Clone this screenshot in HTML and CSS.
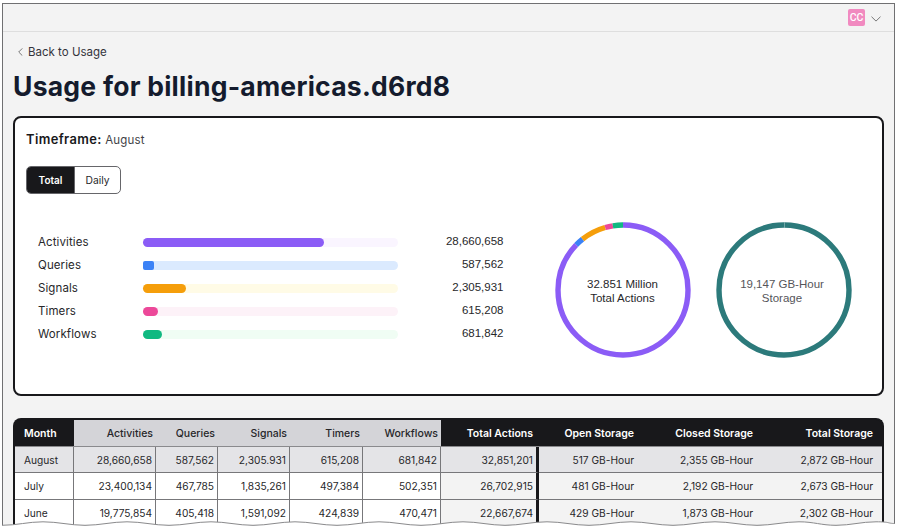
FILE: index.html
```html
<!DOCTYPE html>
<html lang="en">
<head>
<meta charset="utf-8">
<title>Usage</title>
<link rel="stylesheet" href="styles.css">
</head>
<body>
<div class="frame">
  <header class="topbar">
    <span class="avatar">CC</span>
    <svg class="chevron" width="10" height="6" viewBox="0 0 10 6"><path d="M.5 .7 5 5.1 9.500 .7"/></svg>
  </header>
  <main>
    <a class="back"><svg width="5" height="8" viewBox="0 0 5 8"><path d="M4.300 .4.700 4l3.600 3.600"/></svg><span>Back to Usage</span></a>
    <h1><span>Usage for billing-americas.d6rd8</span></h1>
    <section class="card">
      <p class="timeframe"><b>Timeframe:</b> <span>August</span></p>
      <div class="toggle"><span class="on">Total</span><span class="off">Daily</span></div>
      <div class="charts">
        <div class="bars">
          <div class="bar activities"><span class="name">Activities</span><span class="track"><i></i></span><span class="count">28,660,658</span></div>
          <div class="bar queries"><span class="name">Queries</span><span class="track"><i></i></span><span class="count">587,562</span></div>
          <div class="bar signals"><span class="name">Signals</span><span class="track"><i></i></span><span class="count">2,305,931</span></div>
          <div class="bar timers"><span class="name">Timers</span><span class="track"><i></i></span><span class="count">615,208</span></div>
          <div class="bar workflows"><span class="name">Workflows</span><span class="track"><i></i></span><span class="count">681,842</span></div>
        </div>
        <div class="ring">
          <svg width="136" height="136" viewBox="0 0 136 136">
            <g transform="rotate(-90 68 68)" fill="none" stroke-width="5.400">
              <circle cx="68" cy="68" r="65" pathLength="360" stroke="#8b5cf6" stroke-dasharray="314 360"/>
              <circle cx="68" cy="68" r="65" pathLength="360" stroke="#3b82f6" stroke-dasharray="7.500 360" stroke-dashoffset="-314"/>
              <circle cx="68" cy="68" r="65" pathLength="360" stroke="#f59e0b" stroke-dasharray="22.500 360" stroke-dashoffset="-321.500"/>
              <circle cx="68" cy="68" r="65" pathLength="360" stroke="#ec4899" stroke-dasharray="7 360" stroke-dashoffset="-344"/>
              <circle cx="68" cy="68" r="65" pathLength="360" stroke="#10b981" stroke-dasharray="9 360" stroke-dashoffset="-351"/>
            </g>
          </svg>
          <p>32.851 Million<br>Total Actions</p>
        </div>
        <div class="ring storage">
          <svg width="136" height="136" viewBox="0 0 136 136">
            <circle cx="68" cy="68" r="65" fill="none" stroke="#2c7a7b" stroke-width="5.400"/>
            <path class="seam" d="M68.500 0v6"/>
          </svg>
          <p>19,147 GB-Hour<br>Storage</p>
        </div>
      </div>
    </section>
    <section class="table">
      <div class="row head"><b>Month</b><span>Activities</span><span>Queries</span><span>Signals</span><span>Timers</span><span>Workflows</span><b>Total Actions</b><b>Open Storage</b><b>Closed Storage</b><b>Total Storage</b></div>
      <div class="row current"><span>August</span><span>28,660,658</span><span>587,562</span><span>2,305.931</span><span>615,208</span><span>681,842</span><span>32,851,201</span><span>517 GB-Hour</span><span>2,355 GB-Hour</span><span>2,872 GB-Hour</span></div>
      <div class="row"><span>July</span><span>23,400,134</span><span>467,785</span><span>1,835,261</span><span>497,384</span><span>502,351</span><span>26,702,915</span><span>481 GB-Hour</span><span>2,192 GB-Hour</span><span>2,673 GB-Hour</span></div>
      <div class="row"><span>June</span><span>19,775,854</span><span>405,418</span><span>1,591,092</span><span>424,839</span><span>470,471</span><span>22,667,674</span><span>429 GB-Hour</span><span>1,873 GB-Hour</span><span>2,302 GB-Hour</span></div>
    </section>
  </main>
</div>
<svg class="wave" width="900" height="16" viewBox="0 516 900 16">
  <path class="cover" d="M0 525.300H2C17 525.300 28 521.800 43 521.800S70 525.300 85 525.300 112 521.800 127 521.800 154 525.300 169 525.300 196 521.800 211 521.800 238 525.300 253 525.300 280 521.800 295 521.800 322 525.300 337 525.300 364 521.800 379 521.800 406 525.300 421 525.300 448 521.800 463 521.800 490 525.300 505 525.300 532 521.800 547 521.800 574 525.300 589 525.300 616 521.800 631 521.800 658 525.300 673 525.300 700 521.800 715 521.800 742 525.300 757 525.300 784 521.800 799 521.800 821 525.300 836 525.300 861 521.800 876 521.800 887 523.500 895 523.500H900V532H0Z"/>
  <path class="edge" d="M2 525.300C17 525.300 28 521.800 43 521.800S70 525.300 85 525.300 112 521.800 127 521.800 154 525.300 169 525.300 196 521.800 211 521.800 238 525.300 253 525.300 280 521.800 295 521.800 322 525.300 337 525.300 364 521.800 379 521.800 406 525.300 421 525.300 448 521.800 463 521.800 490 525.300 505 525.300 532 521.800 547 521.800 574 525.300 589 525.300 616 521.800 631 521.800 658 525.300 673 525.300 700 521.800 715 521.800 742 525.300 757 525.300 784 521.800 799 521.800 821 525.300 836 525.300 861 521.800 876 521.800 887 523.500 895 523.500"/>
</svg>
</body>
</html>
```
FILE: styles.css
```css
* { box-sizing: border-box; }
body { margin: 0; height: 532px; overflow: hidden; background: #fff; font-family: Inter, sans-serif; color: #27272a; }
p, h1 { margin: 0; }
.frame { margin: 3px 0 0 2px; width: 893px; height: 523px; overflow: hidden; background: #f3f3f3; border: 1px solid #707072; border-bottom: 0; }
.topbar { height: 28px; border-bottom: 1px solid #dedede; display: flex; justify-content: flex-end; align-items: center; gap: 6px; padding-right: 13px; }
.avatar { width: 17px; height: 17px; border-radius: 2px; background: #f18ac0; color: #fff; font: 500 10.500px/17px Roboto, sans-serif; text-align: center; }
.chevron { margin-top: 3px; }
svg path { fill: none; stroke: #777; stroke-width: 1; }
svg .seam { stroke: #8fb9b9; stroke-width: .7; }
main { padding: 0 10px; }
.back { display: flex; align-items: center; gap: 5px; height: 16px; margin: 12px 0 0 5px; font-size: 11.500px; color: #34343c; }
h1 { height: 36px; margin-top: 8px; font-size: 26.500px; letter-spacing: .25px; line-height: 36px; font-weight: 650; color: #141b2d; white-space: nowrap; }
.card { height: 280px; width: 871px; margin-top: 12px; border: 2px solid #18181b; border-radius: 8px; background: #fff; padding: 12px 12px 12px 11px; }
.timeframe { height: 20px; font-size: 11.500px; line-height: 20px; color: #3f3f46; letter-spacing: .15px; }
.timeframe b { font-size: 12.900px; letter-spacing: .4px; font-weight: 600; color: #18181b; }
.toggle { display: flex; width: 95px; height: 28px; margin-top: 16px; border: 1px solid #66666a; border-radius: 5px; overflow: hidden; font-size: 10.300px; line-height: 26px; text-align: center; }
.on { width: 47px; background: #18181b; color: #fff; font-weight: 600; font-size: 10px; }
.off { flex: 1; border-left: 1px solid #66666a; }
.charts { display: flex; margin-top: 28px; }
.bars { width: 465.500px; margin: 9px 51px 0 12px; }
.bar { display: flex; align-items: center; height: 23px; }
.name { width: 105px; font-size: 11.500px; letter-spacing: .1px; padding-bottom: 1px; }
.track { width: 255px; height: 9px; border-radius: 4.500px; }
.track i { display: block; height: 100%; border-radius: 4.500px; }
.count { flex: 1; text-align: right; font: 11.500px/14px "Liberation Sans", sans-serif; padding-bottom: 3px; }
.activities .track { background: #faf5ff; } .activities i { width: 181px; background: #8b5cf6; }
.queries .track { background: #dbeafe; } .queries i { width: 11px; border-radius: 2px; background: #3b82f6; }
.signals .track { background: #fffbe6; } .signals i { width: 43px; background: #f59e0b; }
.timers .track { background: #fdf2f8; } .timers i { width: 15px; background: #ec4899; }
.workflows .track { background: #f0fdf4; } .workflows i { width: 19px; background: #10b981; }
.ring { display: grid; place-items: center; width: 136px; height: 136px; margin-right: 25.500px; }
.ring > * { grid-area: 1 / 1; }
.ring svg { display: block; }
.ring p { font: 11.500px/14px "Liberation Sans", sans-serif; text-align: center; padding-top: 1px; }
.storage { margin-right: 0; color: #55555a; }
.storage p { padding-right: 4px; }
.table { width: 871px; height: 120px; margin-top: 22px; border: solid #18181b; border-width: 2px 2.500px 0; border-radius: 8px 8px 0 0; overflow: hidden; background: #18181b; }
.row { display: grid; grid-template-columns: 59px 82px 62px 72px 73px 78px 98px 98px 119px 1fr; height: 26.500px; font-size: 10.200px; line-height: 26.700px; text-align: right; white-space: nowrap; }
.row > * { height: 26.500px; padding-right: 3px; border-bottom: 1px solid #77777a; border-right: 1px solid #77777a; background: #fff; }
.row > :first-child { text-align: left; padding-left: 9px; }
.row > :nth-child(n+7) { background: #f3f3f3; }
.row > :nth-child(7) { border-right: 3px solid #18181b; }
.row > :nth-child(n+8) { border-right: 0; }
.row > :last-child { padding-right: 9px; }
.current > :nth-child(n) { background: #e4e4e7; }
.head > :nth-child(n) { background: #d4d4d8; border-right: 0; font-size: 10.500px; line-height: 27px; font-weight: 500; border-bottom-color: #8a8a8d; }
.head > b:nth-child(n) { background: #18181b; color: #fff; font-weight: 600; }
.head > :nth-child(7) { padding-right: 6px; }
.wave { position: absolute; left: 0; top: 516px; }
.wave .cover { fill: #fff; stroke: none; }
.wave .edge { stroke: #8a8a8c; }
```
